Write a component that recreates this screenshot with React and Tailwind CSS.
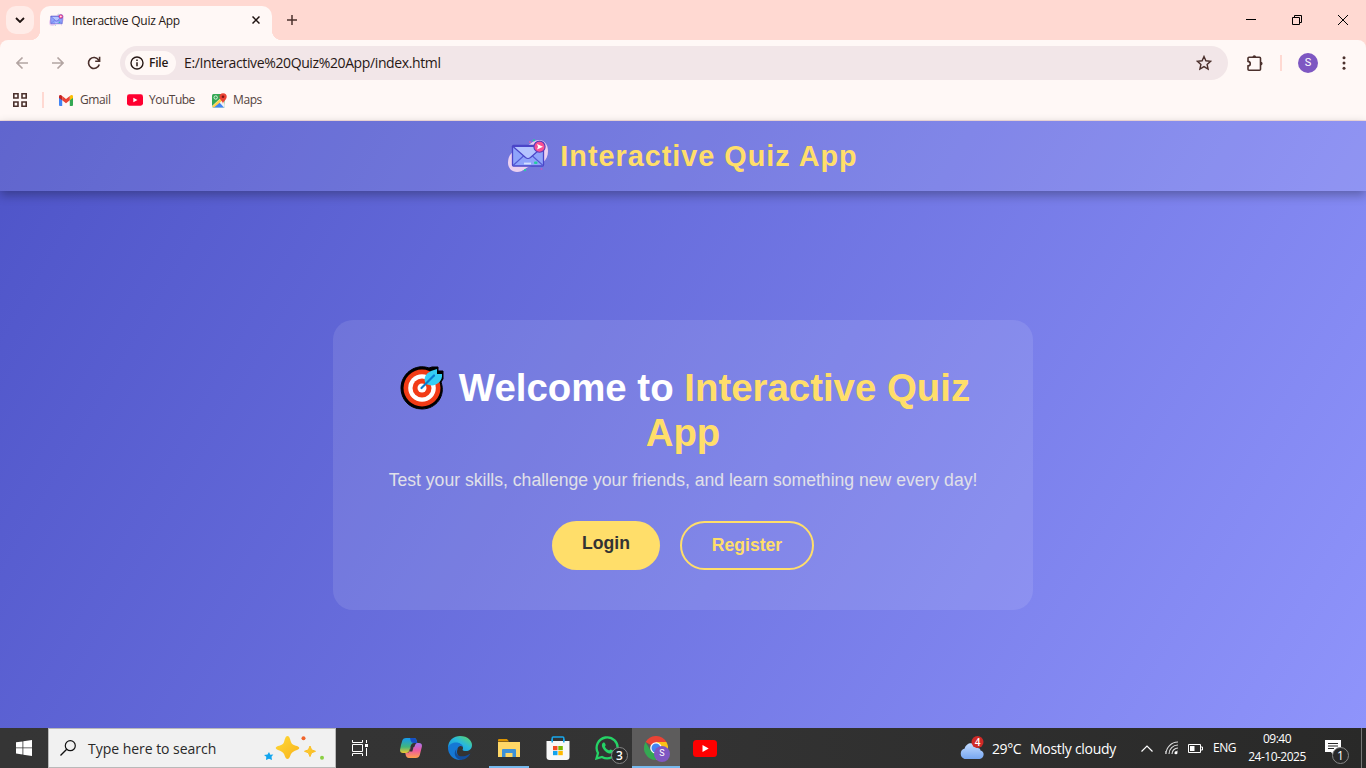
import React from "react";

const ui = "font-['Open_Sans','Noto_Sans',sans-serif]";

function MailLogo({ className }) {
  return (
    <svg viewBox="0 0 40 34" className={className}>
      <path d="M8 12C2 13 0 19 0 24c0 5 4 9 9 9 7 0 8-5 15-6 9-1 16-5 16-15 0-7-4-11-9-11-8 0-13 10-23 11z" fill="#ecd0f0" />
      <rect x="4.500" y="6.500" width="31" height="20.500" rx="1" fill="#8fa4fb" stroke="#4a45c8" strokeWidth="1.300" />
      <path d="M5 26.500l10.500-9.500M35 26.500L24.500 17" stroke="#5358d4" strokeWidth="1.100" fill="none" />
      <path d="M5 7.500l12.500 11q2.500 2 5 0L35 7.500z" fill="#b4c4ff" stroke="#4a45c8" strokeWidth="1.200" />
      <path d="M16 24.500h7" stroke="#d5e0ff" strokeWidth="1.800" />
      <rect x="26" y="22.500" width="3.500" height="2.500" rx="1" fill="#21cfa0" />
      <circle cx="31.500" cy="7.700" r="5.600" fill="#fa4f93" stroke="#5a3bb9" strokeWidth="1.100" />
      <path d="M29 5l6 2.700L29 10.500l1-2.800z" fill="#fff" />
      <circle cx="26" cy="1.300" r="1.100" fill="#21cfa0" /><circle cx="17" cy="31.200" r="1.100" fill="#21cfa0" />
      <circle cx="22" cy="3" r=".9" fill="#e45bb3" /><circle cx="33.500" cy="30" r=".9" fill="#c05bc3" />
    </svg>
  );
}

function Target() {
  return (
    <svg viewBox="0 0 44 44" className="mr-[15px] h-[44px] w-[44px] shrink-0">
      <path d="M38 1v4h5v8l-2 3c5 14-5 27-19 27C9 43 1 33 1 22 1 8 15-3 29 2l3-1z" fill="#000" stroke="#000" strokeLinejoin="round" />
      <circle cx="22" cy="22" r="18.500" fill="#f23b16" />
      <circle cx="22" cy="22" r="13.800" fill="#fff" />
      <circle cx="22" cy="22" r="9.500" fill="#f23b16" />
      <circle cx="22" cy="22" r="4.500" fill="#fff" />
      <path d="M26 18c-3-5-1-10 5-13l6-2v5h5c1 8-7 13-13 11z" fill="#35cdf5" />
      <path d="M21.500 22L34 9.500" stroke="#087bd0" strokeWidth="2.200" strokeLinecap="round" />
    </svg>
  );
}

function YouTube({ className }) {
  return (
    <svg viewBox="0 0 24 17" className={className}>
      <rect width="24" height="17" rx="3.500" fill="currentColor" />
      <path d="M9.500 5v7l6.200-3.500z" fill="#fff" />
    </svg>
  );
}

function TabStrip() {
  return (
    <div className="flex h-[40px] items-start bg-[#ffd9d2]">
      <div className="mt-[6px] ml-[6px] flex h-[28px] w-[28px] items-center justify-center rounded-[10px] bg-[#ffece8]">
        <svg viewBox="0 0 10 6" className="h-[6px] w-[10px]"><path d="M1 1l4 4 4-4" fill="none" stroke="#1f1311" strokeWidth="1.800" /></svg>
      </div>
      <div className="relative mt-[6px] ml-[6px] flex h-[34px] w-[232px] items-center rounded-t-[10px] bg-[#fff8f6] pb-[6px]">
        <div className="absolute bottom-0 -left-[10px] h-[10px] w-[10px] bg-[radial-gradient(circle_at_0_0,transparent_10px,#fff8f6_10.5px)]" />
        <div className="absolute -right-[10px] bottom-0 h-[10px] w-[10px] bg-[radial-gradient(circle_at_100%_0,transparent_10px,#fff8f6_10.5px)]" />
        <MailLogo className="ml-[9px] h-[14px] w-[15px]" />
        <span className="mt-px ml-[8px] w-[170px] text-[12px] tracking-[-0.25px] text-[#271815]">Interactive Quiz App</span>
        <svg viewBox="0 0 8 8" className="ml-[10px] h-[8px] w-[8px]"><path d="M.5.5l7 7m0-7l-7 7" stroke="#1f1311" strokeWidth="1.500" /></svg>
      </div>
      <svg viewBox="0 0 10 10" className="mt-[15px] ml-[15px] h-[10px] w-[10px]"><path d="M5 0v10M0 5h10" stroke="#4b302c" strokeWidth="1.500" /></svg>
      <div className="mr-[18px] ml-auto flex h-[40px] items-center gap-[36px]">
        <svg viewBox="0 0 10 10" className="h-[10px] w-[10px]"><path d="M0 4.500h10" stroke="#000" /></svg>
        <svg viewBox="0 0 10 10" className="h-[10px] w-[10px]"><path d="M.5 2.500h7v7h-7zM2.500 2.500v-2h7v7h-2" fill="none" stroke="#000" /></svg>
        <svg viewBox="0 0 10 10" className="h-[10px] w-[10px]"><path d="M0 0l10 10M10 0L0 10" stroke="#000" /></svg>
      </div>
    </div>
  );
}

function Toolbar() {
  return (
    <div className="flex h-[46px] items-center bg-[#fff8f6]">
      <svg viewBox="0 0 12 12" className="ml-[16px] h-[12px] w-[12px]"><path d="M12 6H1M6.500.5L1 6l5.500 5.500" fill="none" stroke="#b3a5a2" strokeWidth="1.600" /></svg>
      <svg viewBox="0 0 12 12" className="ml-[24px] h-[12px] w-[12px]"><path d="M0 6h11M5.500.5L11 6l-5.500 5.500" fill="none" stroke="#b3a5a2" strokeWidth="1.600" /></svg>
      <svg viewBox="0 0 14 14" className="ml-[23px] h-[14px] w-[14px]"><path d="M12.300 8.500a5.500 5.500 0 1 1-.6-4.400M12.600.8v4.400H8.200" fill="none" stroke="#4b302c" strokeWidth="1.600" /></svg>
      <div className="ml-[19px] flex h-[34px] w-[1108px] items-center rounded-full bg-[#f2e6e8]">
        <div className="ml-[5px] flex h-[24px] w-[51px] items-center rounded-full bg-[#fff8f6]">
          <svg viewBox="0 0 14 14" className="ml-[5px] h-[14px] w-[14px]"><circle cx="7" cy="7" r="6" fill="none" stroke="#271815" strokeWidth="1.400" /><path d="M7 6.200v4M7 3.500V5" stroke="#271815" strokeWidth="1.500" /></svg>
          <span className="ml-[5px] text-[12px] font-semibold tracking-[-0.2px] text-[#271815]">File</span>
        </div>
        <span className="mb-px ml-[8px] text-[14px] tracking-[-0.38px] text-[#271815]">E:/Interactive%20Quiz%20App/index.html</span>
        <svg viewBox="0 0 16 16" className="mr-[16px] ml-auto h-[16px] w-[16px]"><path d="M8 1.500l1.900 4.300 4.700.5-3.500 3.100 1 4.600L8 11.600 3.900 14l1-4.600L1.400 6.300l4.700-.5z" fill="none" stroke="#4b302c" strokeWidth="1.400" /></svg>
      </div>
      <svg viewBox="0 0 18 18" className="ml-[18px] h-[18px] w-[18px]"><path d="M2 4.200q0-1 1-1h10.500q1 0 1 1v11q0 1-1 1H3q-1 0-1-1v-3.300c3-.3 3-4.200 0-4.500z" fill="none" stroke="#4b302c" strokeWidth="1.600" /><path d="M6.500 3a1.800 1.800 0 0 1 3.600 0zM14.800 7.800a1.800 1.800 0 0 1 0 3.600z" fill="#4b302c" /></svg>
      <div className="ml-[16px] h-[16px] w-[2px] bg-[#ffd9d2]" />
      <div className="ml-[16px] flex h-[20px] w-[20px] items-center justify-center rounded-full bg-[#7e57c2] font-[Roboto,sans-serif] text-[11px] text-white">S</div>
      <svg viewBox="0 0 4 14" className="ml-[24px] h-[14px] w-[4px]"><circle cx="2" cy="1.700" r="1.500" fill="#4b302c" /><circle cx="2" cy="7" r="1.500" fill="#4b302c" /><circle cx="2" cy="12.300" r="1.500" fill="#4b302c" /></svg>
    </div>
  );
}

function Bookmarks() {
  return (
    <div className="flex h-[35px] items-center border-b border-[#f5dfe0] bg-[#fff8f6] pb-[6px] text-[12px] text-[#534340]">
      <svg viewBox="0 0 14 14" className="ml-[13px] h-[14px] w-[14px]"><path d="M.8.8H5V5H.8zM9 .8h4.200V5H9zM.8 9H5v4.200H.8zM9 9h4.200v4.200H9z" fill="none" stroke="#4b302c" strokeWidth="1.600" /></svg>
      <div className="ml-[15px] h-[16px] w-[2px] bg-[#ffd9d2]" />
      <svg viewBox="0 0 14 11" className="ml-[15px] h-[11px] w-[14px]">
        <path d="M0 2v8q0 1 1 1h2.200V4z" fill="#4285f4" /><path d="M14 2v8q0 1-1 1h-2.200V4z" fill="#34a853" />
        <path d="M10.800 1v4.300L14 3V1.600c0-1.700-1.800-2-3.200-.6z" fill="#fbbc04" /><path d="M3.200 1v4.300L0 3V1.600C0-.1 1.800-.4 3.200 1z" fill="#c5221f" />
        <path d="M3.200 1L7 3.900 10.800 1v4.300L7 8.200 3.200 5.300z" fill="#ea4335" />
      </svg>
      <span className="ml-[7px] w-[31px] tracking-[-0.4px] whitespace-nowrap">Gmail</span>
      <YouTube className="ml-[16px] h-[12px] w-[16px] text-[#ff0030]" />
      <span className="ml-[6px] w-[46px] tracking-[-0.5px] whitespace-nowrap">YouTube</span>
      <svg viewBox="0 0 15 15" className="ml-[17px] h-[15px] w-[15px]">
        <rect y="1" width="13" height="13.500" rx="1.500" fill="#34a853" />
        <path d="M0 13L12 2l1 11.500-1 1H1z" fill="#f4f4f4" /><path d="M1 14.500l6-5.500 5 5.500z" fill="#4285f4" /><path d="M0 13.500L9 5l2 2-9 7.500z" fill="#ffd04b" />
        <circle cx="3.700" cy="4.500" r="1.700" fill="none" stroke="#d9f2df" />
        <path d="M11 11c0-3-3.500-4-3.500-7.200a3.600 3.600 0 0 1 7.200 0C14.700 7 11 8 11 11z" fill="#ea4335" /><circle cx="11" cy="3.800" r="1.300" fill="#811411" />
      </svg>
      <span className="ml-[6px] tracking-[-0.4px]">Maps</span>
    </div>
  );
}

function Page() {
  return (
    <main className="flex h-[607px] flex-col bg-[linear-gradient(120deg,#4e54c8,#8f94fb)] font-['Liberation_Sans',Arial,sans-serif]">
      <header className="flex h-[70px] shrink-0 items-center justify-center bg-white/10 shadow-[0_4px_10px_rgba(0,0,0,0.3)]">
        <MailLogo className="mr-[12px] h-[34px] w-[40px]" />
        <h1 className="text-[28.8px] leading-[34px] font-bold tracking-[1px] text-[#ffde6a]">Interactive Quiz App</h1>
      </header>
      <div className="flex flex-1 justify-center pt-[129px]">
        <section className="flex h-[290px] w-[700px] flex-col items-center rounded-[20px] bg-white/10 pt-[45px]">
          <h2 className="flex flex-col items-center text-[38.4px] leading-[45px] font-bold text-[#ffde6a]">
            <span className="flex h-[45px] items-center pl-[4px] whitespace-pre"><Target /><span><span className="text-white">Welcome to </span>Interactive Quiz</span></span>
            <span>App</span>
          </h2>
          <p className="mt-[13px] text-[17.6px] leading-[24px] whitespace-nowrap text-[#e0e0e8]">Test your skills, challenge your friends, and learn something new every day!</p>
          <div className="mt-[29px] flex gap-[20px] text-[17.6px] leading-[21px] font-bold">
            <button className="flex h-[49px] w-[108px] items-start justify-center rounded-full bg-[#ffde6a] pt-[12px] text-[#333]">Login</button>
            <button className="flex h-[49px] w-[134px] items-start justify-center rounded-full border-2 border-[#ffde6a] pt-[12px] text-[#ffde6a]">Register</button>
          </div>
        </section>
      </div>
    </main>
  );
}

function Chrome() {
  return (
    <svg viewBox="0 0 24 24" className="h-[24px] w-[24px]">
      <path d="M12 12L1.600 6A12 12 0 0 1 22.400 6z" fill="#ea4335" /><path d="M12 12V6h10.400A12 12 0 0 1 12 24z" fill="#fbc116" /><path d="M17.200 15L12 24A12 12 0 0 1 1.600 6l5.200 9z" fill="#34a853" />
      <circle cx="12" cy="12" r="5.800" fill="#fff" /><circle cx="12" cy="12" r="4.500" fill="#4285f4" />
    </svg>
  );
}

function Slot({ children, className = "w-[48px]" }) {
  return <div className={"relative flex h-[40px] shrink-0 items-center justify-center " + className}>{children}</div>;
}

function Taskbar() {
  return (
    <footer className="flex h-[40px] items-center bg-[linear-gradient(90deg,#353535,#333_50%,#292928)] text-white">
      <Slot><svg viewBox="0 0 16 16" className="h-[16px] w-[16px]"><path d="M0 2.300l6.500-.9v6.100H0zM7.300 1.300L16 0v7.500H7.300zM0 8.300h6.500v6.200L0 13.600zM7.300 8.300H16V16l-8.700-1.300z" fill="#fff" /></svg></Slot>
      <div className="flex h-[40px] w-[288px] items-center border border-[#b9b9b9] bg-[#f1f1f1]">
        <svg viewBox="0 0 16 16" className="ml-[11px] h-[16px] w-[16px]"><circle cx="10.300" cy="5.700" r="5" fill="none" stroke="#111" strokeWidth="1.200" /><path d="M6.700 9.300L.5 15.500" stroke="#111" strokeWidth="1.300" /></svg>
        <span className="ml-[12px] w-[140px] text-[14px] tracking-[-0.03px] whitespace-nowrap text-[#292929]">Type here to search</span>
        <svg viewBox="0 0 60 25" className="ml-[36px] h-[25px] w-[60px] shrink-0">
          <defs><linearGradient id="spark" x2="1" y2="1"><stop stopColor="#ffda36" /><stop offset="1" stopColor="#f8b21c" /></linearGradient></defs>
          <path d="M23.500 0c2 0 2.500 3 3.500 6s3 3 6 4 3 3 0 4-5 2-6 4-1.500 5-3.500 5-2.500-3-3.500-5-3-3-6-4-3-3 0-4 5-1 6-4 1.500-6 3.500-6z" fill="url(#spark)" />
          <path d="M46 10l1.600 3.800 3.900 1.500-3.900 1.500-1.600 3.800-1.600-3.800-3.900-1.500 3.900-1.500z" fill="url(#spark)" stroke="#fbbf27" strokeLinejoin="round" />
          <path d="M5 16l1.300 2.700 3-.3-1.800 2.300.5 3.300-3-1.300L2 24l.3-3.200L0 19l3.500-.5z" fill="#12a5ee" />
          <circle cx="39.500" cy="2.300" r="2" fill="#f0642b" /><circle cx="58" cy="21.800" r="2" fill="#8bcf44" />
        </svg>
      </div>
      <Slot><svg viewBox="0 0 16 16" className="h-[16px] w-[16px]"><path d="M.5 4.500h10v7H.5zM.5 0v2.500h10V0M.5 16v-2.500h10V16M14.500 0v3M14.500 8v8" fill="none" stroke="#fff" /><path d="M13 4h3v3h-3z" fill="#fff" /></svg></Slot>
      <Slot className="ml-[3px] w-[48px]">
        <svg viewBox="0 0 22 20" className="h-[20px] w-[22px]">
          <defs>
            <linearGradient id="cl" x2="0" y2="1"><stop stopColor="#1599ef" /><stop offset=".6" stopColor="#42b67a" /><stop offset="1" stopColor="#f0c831" /></linearGradient>
            <linearGradient id="cr" x2="0" y2="1"><stop stopColor="#a875ef" /><stop offset=".5" stopColor="#ed5c9e" /><stop offset="1" stopColor="#ffa14b" /></linearGradient>
          </defs>
          <path d="M6 0h8q2 0 2.500 2l.8 3h-3.300q-2.500 0-3.300 3l-1.500 5q-.7 2-3 2H3q-3 0-3-3Q1 6 2.500 2 3.300 0 6 0z" fill="url(#cl)" />
          <path d="M10 0h4q2 0 2.500 2l.8 3h-3.500q-2.600 0-3-2z" fill="#164fc5" />
          <path d="M17 5h2q3.600 0 2.800 4l-2 8q-.8 3-4 3H9q-3 0-3.500-4L5.300 15h1.500q2.300 0 3-2.500l1-3.500h3.500l1-2.500Q15.800 5 17 5z" fill="url(#cr)" />
          <path d="M11.500 7.500h2.500l-1.700 6H9.500z" fill="#333" />
        </svg>
      </Slot>
      <Slot className="ml-px w-[48px]">
        <svg viewBox="0 0 24 24" className="h-[24px] w-[24px]">
          <defs><linearGradient id="edge" y1="1" x2="1" y2="0"><stop stopColor="#178fd8" /><stop offset=".55" stopColor="#28b9dc" /><stop offset="1" stopColor="#65dc59" /></linearGradient></defs>
          <path d="M0 12C0 4 6 0 12 0c8 0 12 5 12 9 0 4-3 6-6 6-4 0-4-1-3-3 0-4-6-6-10-3-3 1-5 3-5 3z" fill="url(#edge)" />
          <path d="M0 12c1-4 5-5.500 8-5.500 4 0 7 2.500 7 5.500-1-1-6-1-6 4 0 4 4 6 4 8C5 24.500 0 18 0 12z" fill="#1578d4" />
          <path d="M8.500 13c-2 7 5 10 14 4.500C20 22 16 24 12 24c-5-2-7-7-3.500-11z" fill="#124d9c" />
          <path d="M9.500 12.500c1-3 4-3.500 5.500-1-.5 2-1.500 3 .5 4.300-2 .8-5.500.2-6-3.300z" fill="#333" />
        </svg>
      </Slot>
      <Slot className="mr-[4px] ml-[5px] w-[40px] border-b-2 border-[#76b9ed] pt-[2px]">
        <svg viewBox="0 0 22 19" className="h-[19px] w-[22px]"><path d="M0 1q0-1 1-1h8l2 2.500H0z" fill="#dc9300" /><path d="M0 3h22v15H0z" fill="#ffd766" /><path d="M4 18v-7q0-1 1-1h12q1 0 1 1v7h-3.500v-4h-7v4z" fill="#3d91d8" /></svg>
      </Slot>
      <Slot className="ml-px w-[48px]">
        <svg viewBox="0 0 24 24" className="h-[24px] w-[24px]"><path d="M6.200 7V2q0-1 1-1h9.600q1 0 1 1v5" fill="none" stroke="#18a8ed" strokeWidth="1.500" /><path d="M.5 5h23v16q0 3-3 3h-17q-3 0-3-3z" fill="#f8f8f8" /><path d="M7 10h4.500v4.200H7z" fill="#f14c25" /><path d="M12.300 10h4.500v4.200h-4.500z" fill="#7ab800" /><path d="M7 15h4.500v4.200H7z" fill="#12a3ed" /><path d="M12.300 15h4.500v4.200h-4.500z" fill="#ffb900" /><path d="M6.200 6.500V3M17.800 6.500V3" stroke="#18a8ed" strokeWidth="1.500" /></svg>
      </Slot>
      <Slot className="ml-px w-[48px]">
        <svg viewBox="0 0 24 24" className="h-[24px] w-[24px]"><path d="M1.500 22.500L3 17a10.500 10.500 0 1 1 4 4z" fill="none" stroke="#25d366" strokeWidth="2.300" /><path d="M8.400 6.500c-3 2-1 6 1.600 8.400 3 2.700 6 3.600 7.700 1.600 1-1.500.6-2-.5-2.500-2-1-2-.7-3 .6-2-.6-3.600-2.300-4.300-4 1.200-1 .8-1.600.2-3-.4-1-.8-1.300-1.700-1.100z" fill="#25d366" /></svg>
        <div className="absolute top-[19px] left-[28px] flex h-[17px] w-[17px] items-center justify-center rounded-full border border-[#858585] bg-[#2a2a2a] text-[12px] font-semibold">3</div>
      </Slot>
      <Slot className="ml-px w-[48px] border-b-2 border-[#76b9ed] bg-[#5d5c5c] pt-[2px]">
        <Chrome />
        <div className="absolute top-[18px] left-[22px] flex h-[16px] w-[16px] items-center justify-center rounded-full bg-[#7e57c2] font-[Roboto,sans-serif] text-[9px]">S</div>
      </Slot>
      <Slot className="ml-px w-[48px]"><YouTube className="h-[17px] w-[24px] text-[#ff0000]" /></Slot>
      <div className="ml-auto flex h-[40px] items-center">
        <svg viewBox="0 0 26 24" className="mr-px h-[24px] w-[26px]">
          <defs><linearGradient id="cloud" x2="0" y2="1"><stop stopColor="#c4dcff" /><stop offset="1" stopColor="#76a6f1" /></linearGradient></defs>
          <path d="M5.500 23a5.500 5.500 0 0 1 .2-10.500C7 6 16 5 17.500 12c3-.5 4 1 4 2.500 5 1 3.500 8.500-1 8.500z" fill="url(#cloud)" /><circle cx="18.500" cy="6" r="6" fill="#cf2a27" />
          <text x="18.500" y="9.500" textAnchor="middle" fill="#fff" fontSize="10" fontWeight="600" fontFamily="Open Sans">4</text>
        </svg>
        <span className="ml-[6px] w-[30px] text-[14px] tracking-[-0.4px] whitespace-nowrap">29°C</span>
        <span className="ml-[8px] w-[87px] text-[14px] tracking-[-0.28px] whitespace-nowrap">Mostly cloudy</span>
        <svg viewBox="0 0 12 7" className="ml-[24px] h-[7px] w-[12px]"><path d="M.5 6.500L6 1l5.500 5.500" fill="none" stroke="#fff" strokeWidth="1.200" /></svg>
        <svg viewBox="0 0 14 14" className="ml-[12px] h-[14px] w-[14px]"><path d="M1 13A12 12 0 0 1 13 1M4 13a9 9 0 0 1 9-9M7 13a6 6 0 0 1 6-6" fill="none" stroke="#ddd" strokeWidth="1.100" /><path d="M.5 10v3M10 13a3 3 0 0 1 3-3" fill="none" stroke="#aaa" /><circle cx="11" cy="11.700" r="1.500" fill="#fff" /></svg>
        <svg viewBox="0 0 15 9" className="ml-[9px] h-[9px] w-[15px]"><path d="M.5.500h12v8H.5zM13 3h1.500v3H13" fill="none" stroke="#fff" /><path d="M2 2h4.500v5H2z" fill="#fff" /></svg>
        <span className="ml-[10px] w-[23px] text-[12px] tracking-[-0.5px] whitespace-nowrap">ENG</span>
        <div className="ml-[11px] flex w-[60px] flex-col items-center text-[12px] leading-[18px] tracking-[-0.5px] whitespace-nowrap"><span>09:40</span><span>24-10-2025</span></div>
        <div className="relative ml-[18px] h-[24px] w-[25px]">
          <svg viewBox="0 0 16 16" className="mt-[4px] h-[16px] w-[16px]"><path d="M0 0h16v12H9v4l-3-4H0z" fill="#fff" /><path d="M3 3.500h10M3 6h10M3 8.500h6" stroke="#292929" /></svg>
          <div className="absolute top-[11px] left-[7px] flex h-[17px] w-[17px] items-center justify-center rounded-full border border-[#888] bg-[#292929] text-[12px]">1</div>
        </div>
        <div className="ml-[11px] h-[40px] w-px bg-[#777]" />
        <div className="w-[4px]" />
      </div>
    </footer>
  );
}

export default function App() {
  return (
    <div className={"flex h-[768px] w-[1366px] flex-col overflow-hidden " + ui}>
      <TabStrip />
      <div className="bg-[#ffd9d2]"><div className="overflow-hidden rounded-t-[8px]"><Toolbar /><Bookmarks /></div></div>
      <Page />
      <Taskbar />
    </div>
  );
}
